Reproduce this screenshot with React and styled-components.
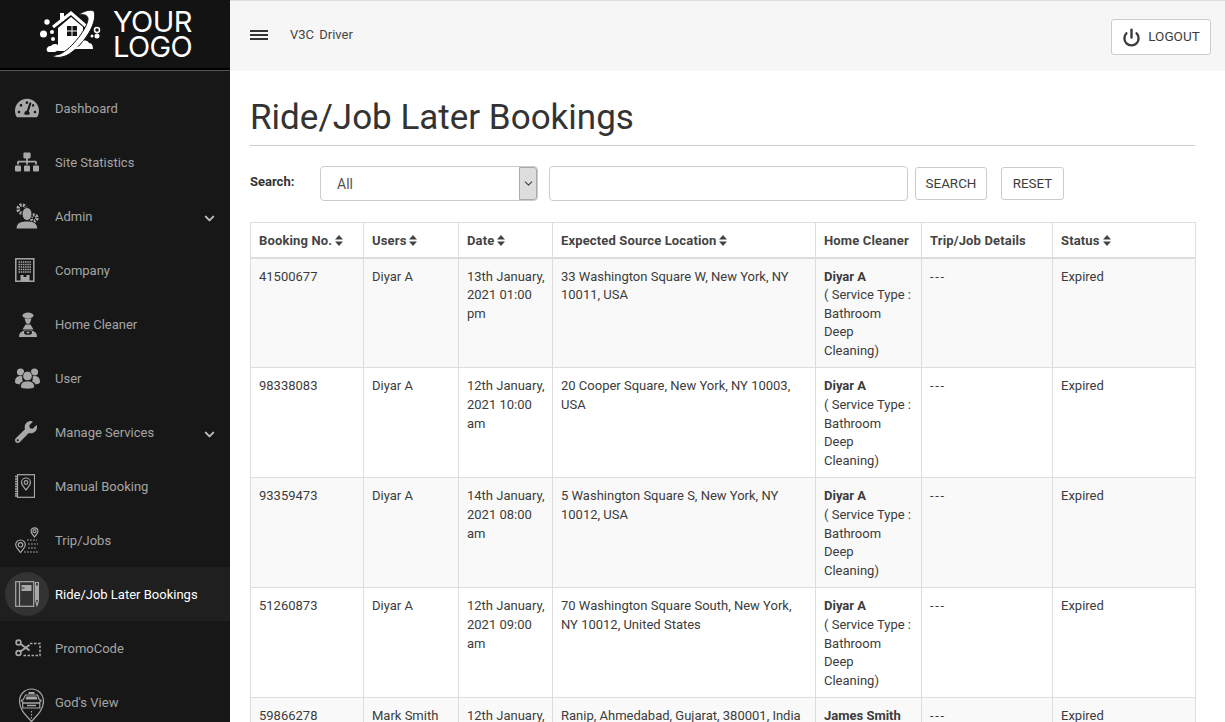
import styled, { createGlobalStyle } from 'styled-components';
import { FaTachometerAlt, FaSitemap, FaWrench } from 'react-icons/fa';
import { FiChevronDown, FiPower } from 'react-icons/fi';

const GlobalStyle = createGlobalStyle`
	html, body {
		margin: 0;
		height: 100%;
		overflow: hidden;
	}
	body {
		font-family: 'Roboto', 'Liberation Sans', sans-serif;
		font-size: 13px;
		line-height: 1.42857;
		color: #3c3c3c;
		background: #fff;
	}
	* {
		box-sizing: border-box;
	}
`;

const Page = styled.div`
	display: flex;
	height: 100vh;
	overflow: hidden;
`;

const Sidebar = styled.aside`
	width: 230px;
	flex: none;
	background: #171717;
`;

const LogoBar = styled.div`
	height: 71px;
	background: #131313;
	border-bottom: 1px solid #555;
	box-shadow: inset 0 -2px 0 #000;
	display: flex;
	align-items: center;
	padding: 0 0 2px 40px;
	gap: 11px;
`;

const LogoText = styled.div`
	font-family: 'Inter', sans-serif;
	font-size: 29px;
	line-height: 25px;
	font-weight: 400;
	letter-spacing: -0.6px;
	color: #fff;
`;

const Menu = styled.nav`
	padding-top: 10px;
`;

const MenuItem = styled.div`
	height: 54px;
	display: flex;
	align-items: center;
	position: relative;
	padding-left: 15px;
	color: ${(p) => (p.$active ? '#fff' : '#a5a5a5')};
	background: ${(p) => (p.$active ? '#1f1f1f' : 'transparent')};
`;

const MenuLabel = styled.span`
	margin-top: 2px;
`;

const IconSlot = styled.span`
	width: 40px;
	height: 44px;
	flex: none;
	display: flex;
	align-items: center;
	color: #a8a8a8;
	position: relative;
	svg {
		display: block;
	}
`;

const ActiveDisc = styled.span`
	position: absolute;
	left: -10px;
	top: 0;
	width: 44px;
	height: 44px;
	border-radius: 50%;
	background: #333;
`;

const IconInner = styled.span`
	position: relative;
	display: block;
`;

const Caret = styled(FiChevronDown)`
	position: absolute;
	right: 13px;
	top: 22px;
	color: #bbb;
	stroke-width: 3.2;
`;

const Main = styled.div`
	flex: 1;
	min-width: 0;
`;

const TopBar = styled.header`
	height: 71px;
	background: #f6f6f6;
	border-top: 1px solid #ddd;
	display: flex;
	align-items: center;
	padding: 0 14px 2px 20px;
`;

const Burger = styled.span`
	width: 18px;
	height: 10px;
	border-top: 2px solid #333;
	border-bottom: 2px solid #333;
	position: relative;
	&::after {
		content: '';
		position: absolute;
		left: 0;
		right: 0;
		top: 2px;
		height: 2px;
		background: #333;
	}
`;

const Brand = styled.span`
	margin-left: 22px;
	font-size: 13px;
	word-spacing: 2px;
	color: #444;
`;

const LogoutButton = styled.button`
	margin-left: auto;
	height: 36px;
	width: 100px;
	margin-top: 3px;
	padding: 1px 0 0;
	display: flex;
	align-items: center;
	justify-content: center;
	gap: 7px;
	background: #fff;
	border: 1px solid #ccc;
	border-radius: 3px;
	font: inherit;
	font-size: 13.5px;
	color: #3c3c3c;
	svg {
		stroke-width: 3;
	}
`;

const Content = styled.main`
	padding: 0 30px 0 20px;
`;

const Title = styled.h1`
	margin: 0;
	height: 75px;
	padding-top: 25px;
	font-size: 35px;
	line-height: 44px;
	font-weight: 400;
	color: #333;
	border-bottom: 1px solid #ccc;
`;

const SearchRow = styled.form`
	display: flex;
	align-items: center;
	height: 35px;
	margin: 20px 0 21px;
`;

const SearchLabel = styled.label`
	width: 70px;
	font-weight: 700;
	margin-top: -2px;
	color: #333;
`;

const SelectBox = styled.div`
	width: 218px;
	height: 35px;
	border: 1px solid #ccc;
	border-radius: 4px;
	display: flex;
	align-items: center;
	justify-content: space-between;
	padding: 2px 0 0 16px;
	font-size: 14px;
	color: #555;
`;

const SelectArrow = styled.span`
	width: 18px;
	height: 33px;
	margin-top: -2px;
	background: #ddd;
	border: 1px solid #aaa;
	border-radius: 0 3px 3px 0;
	display: flex;
	align-items: center;
	justify-content: center;
	color: #444;
`;

const TextInput = styled.input`
	width: 359px;
	height: 35px;
	margin: 0 7px 0 11px;
	border: 1px solid #ccc;
	border-radius: 4px;
`;

const PlainButton = styled.button`
	height: 33px;
	width: ${(p) => p.$width}px;
	padding: 1px 0 0;
	margin-right: 14px;
	background: #fff;
	border: 1px solid #ccc;
	border-radius: 3px;
	font: inherit;
	font-size: 13.4px;
	color: #3c3c3c;
`;

const Table = styled.table`
	width: 945px;
	table-layout: fixed;
	border-collapse: collapse;
	th, td {
		border: 1px solid #ddd;
		padding: 9px 8px 7px;
		text-align: left;
		vertical-align: top;
	}
	td {
		height: 110px;
	}
	th {
		padding: 9px 8px 6px;
		border-bottom-width: 2px;
		font-weight: 700;
		letter-spacing: 0.15px;
		color: #444;
		white-space: nowrap;
	}
	tbody tr:nth-child(odd) {
		background: #f9f9f9;
	}
`;

const SortIcon = styled.svg`
	width: 8px;
	height: 11px;
	margin-left: 3px;
	vertical-align: -1px;
	fill: #444;
`;

const Line = styled.span`
	display: block;
	white-space: nowrap;
`;

const Dashes = styled.span`
	letter-spacing: 1.6px;
`;

const Sort = () => (
	<SortIcon viewBox="0 0 8 11">
		<path d="M4 0l4 4.6H0zM4 11L0 6.4h8z" />
	</SortIcon>
);

const line = { fill: 'none', stroke: 'currentColor', strokeWidth: 1.2 };

// drawn in page coordinates, so the numbers read straight off the screenshot
const LogoMark = () => (
	<svg width="62" height="50" viewBox="40 10 62 50" fill="#fff">
		<path d="M53 28L71 14l16 14" fill="none" stroke="#fff" strokeWidth="3" />
		<path d="M60 14h4v8h-4z" />
		<path d="M58 29l13-11 12 10v12L68 52H58z" />
		<path d="M67 27h4.500v4.500H67zM72.500 27H77v4.500h-4.500zM67 32.500h4.500V37H67zM72.500 32.500H77V37h-4.500z" fill="#131313" />
		<path
			d="M94 12c4 12-10 32-22 41-6 5-14 7-20 4l8-2c12-5 28-27 28-35 0-4-4-5-10-4 6-4 12-6 16-4z"
			stroke="#131313"
			strokeWidth="1"
		/>
		<path d="M47 52c-1-3 1-5 4-5 1-2 5-3 7-1 3-1 5 1 5 3l-8 4h-7zM73 50c6-2 9-5 10-8 3-1 5 0 6 2 3 0 4 3 4 6z" />
		<circle cx="47" cy="23" r="2.700" />
		<circle cx="43.500" cy="35" r="3.500" />
		<circle cx="52" cy="33" r="2" />
		<circle cx="53" cy="40" r="2" />
		<circle cx="97" cy="31" r="2.500" fill="none" stroke="#fff" strokeWidth="1.500" />
		<circle cx="97" cy="37" r="2.500" />
		<circle cx="92" cy="37" r="1.500" />
	</svg>
);

const AdminIcon = () => (
	<svg width="24" height="26" viewBox="0 0 24 26" fill="currentColor">
		<circle cx="7" cy="6" r="4" fill="none" stroke="currentColor" strokeWidth="3.400" strokeDasharray="2 1.200" />
		<circle cx="19" cy="15" r="3" fill="none" stroke="currentColor" strokeWidth="3.400" strokeDasharray="2 1.100" />
		<ellipse cx="12" cy="11" rx="5" ry="6.500" stroke="#171717" strokeWidth="1" />
		<path d="M1 26c0-6 4-8 11-8s10 2 11 8z" stroke="#171717" strokeWidth="1" />
	</svg>
);

const CompanyIcon = () => (
	<svg width="20" height="24" viewBox="0 0 20 24">
		<rect x="0.800" y="0.800" width="18" height="22.400" {...line} strokeWidth="1.500" />
		<path
			d="M3.500 4h13M3.500 6.500h13M3.500 9h13M3.500 11.500h13M3.500 14h13"
			stroke="currentColor"
			strokeWidth="1.500"
			strokeDasharray="1.500 0.700"
		/>
		<path d="M5.500 23v-6h3v2h3v-2h3v6z" fill="currentColor" />
	</svg>
);

const CleanerIcon = () => (
	<svg width="22" height="25" viewBox="-4 0 22 25" fill="currentColor">
		<ellipse cx="9" cy="3.500" rx="5.500" ry="3" />
		<path d="M5.500 6.500h7l-1 3a2.500 2.500 0 0 1-5 0z" />
		<path d="M6.500 12.500h5l3 5H3.500z" />
		<path d="M0 25c0-5 4-7 9-7s9 2 9 7z" />
		<ellipse cx="9" cy="20.500" rx="4" ry="2.300" fill="#171717" />
		<ellipse cx="9" cy="20.500" rx="1.500" ry="0.900" />
	</svg>
);

const GroupIcon = () => (
	<svg width="25" height="21" viewBox="0 0 25 21" fill="currentColor">
		<circle cx="5.500" cy="4" r="3.600" />
		<circle cx="19.500" cy="4" r="3.600" />
		<path d="M0 14c0-4 2-6 5.500-6 1 0 1.700.2 2.200.5C7 10 7 12 8 13.500 6 14 5 15 4.500 16.500 2 16 0 15.500 0 14zM25 14c0-4-2-6-5.500-6-1 0-1.700.2-2.200.5.700 1.500.700 3.500-.3 5 2 .5 3 1.500 3.500 3 2.500-.5 4.500-1 4.500-2.500z" />
		<circle cx="12.500" cy="8" r="4.800" stroke="#171717" strokeWidth="0.800" />
		<path d="M5.500 19c0-4 2.500-6 7-6s7 2 7 6c0 1-3 2-7 2s-7-1-7-2z" stroke="#171717" strokeWidth="0.800" />
	</svg>
);

const BookingIcon = () => (
	<svg width="20" height="24" viewBox="0 0 20 24">
		<rect x="2.500" y="0.700" width="17" height="22.600" {...line} />
		<path d="M3 2.500H0M3 5H0M3 7.500H0M3 10H0M3 12.500H0M3 15H0M3 17.500H0M3 20H0M3 22H0" stroke="currentColor" strokeWidth="1.500" />
		<path d="M11 16c-3-4-4.500-5.500-4.500-7.500a4.500 4.500 0 0 1 9 0c0 2-1.500 3.500-4.500 7.500z" {...line} />
		<circle cx="11" cy="8.500" r="1.800" {...line} />
	</svg>
);

const TripIcon = () => (
	<svg width="25" height="26" viewBox="0 0 25 26">
		<path d="M5.500 25.500c-3-3.500-4.800-5.500-4.800-7.700a4.800 4.800 0 0 1 9.600 0c0 2.200-1.800 4.200-4.800 7.700z" {...line} />
		<circle cx="5.500" cy="17.800" r="2.200" {...line} />
		<path d="M19.500 10c-2-2.500-3.400-4-3.400-5.800a3.400 3.400 0 0 1 6.800 0c0 1.800-1.400 3.300-3.400 5.800z" {...line} />
		<circle cx="19.500" cy="4.200" r="1.500" {...line} />
		<path
			d="M12 13h10M13 17h10M13 21h9M9 25h14"
			{...line}
			strokeDasharray="1.800 1.200"
		/>
	</svg>
);

const LaterIcon = () => (
	<svg width="24" height="26" viewBox="0 0 24 26">
		<rect x="0.700" y="0.700" width="18" height="24.600" {...line} />
		<path d="M4.500 1v24" {...line} />
		<rect x="6.500" y="4" width="10" height="6" fill="currentColor" />
		<path d="M6.500 7h3" stroke="#333" strokeWidth="1" />
		<path d="M20.500 1.500h3v18l-1.500 5-1.500-5zM20 5h4" {...line} />
		<path d="M20.500 5h3v14h-3z" fill="currentColor" />
	</svg>
);

const PromoIcon = () => (
	<svg width="26" height="18" viewBox="0 0 26 18">
		<circle cx="3.500" cy="3.500" r="2.400" {...line} strokeWidth="1.600" />
		<circle cx="3.500" cy="14" r="2.400" {...line} strokeWidth="1.600" />
		<path d="M5.500 5l9 6.500M5.500 12.500L14.500 6" stroke="currentColor" strokeWidth="2" />
		<path d="M15 4.500h10v12H8" {...line} strokeDasharray="2.500 1.500" strokeWidth="1.500" />
	</svg>
);

const GodsIcon = () => (
	<svg width="29" height="40" viewBox="-4 -6 29 40">
		<path d="M12.500 33.500c-8-8.500-12-13-12-20.500a12 12 0 0 1 24 0c0 7.500-4 12-12 20.500z" {...line} />
		<path d="M9.500 4h6v2h-6z" fill="currentColor" />
		<path d="M6.500 7h12l2 5h1.500v1.200l-1.200.6V20H3.700v-6.200l-1.200-.6V12H4z" {...line} />
		<path d="M7.500 8.500h10l1 3h-12z" fill="currentColor" />
		<path d="M4 15h17M8 17.500h9" stroke="currentColor" strokeWidth="1.400" />
		<path d="M12.500 23v8" stroke="currentColor" strokeWidth="1.200" strokeDasharray="1.500 1.500" />
	</svg>
);

const menuItems = [
	{ label: 'Dashboard', icon: <FaTachometerAlt size={24} /> },
	{ label: 'Site Statistics', icon: <FaSitemap size={24} /> },
	{ label: 'Admin', icon: <AdminIcon />, caret: true },
	{ label: 'Company', icon: <CompanyIcon /> },
	{ label: 'Home Cleaner', icon: <CleanerIcon /> },
	{ label: 'User', icon: <GroupIcon /> },
	{ label: 'Manage Services', icon: <FaWrench size={22} />, caret: true },
	{ label: 'Manual Booking', icon: <BookingIcon /> },
	{ label: 'Trip/Jobs', icon: <TripIcon /> },
	{ label: 'Ride/Job Later Bookings', icon: <LaterIcon />, active: true },
	{ label: 'PromoCode', icon: <PromoIcon /> },
	{ label: "God's View", icon: <GodsIcon /> },
];

const serviceLines = ['( Service Type :', 'Bathroom', 'Deep', 'Cleaning)'];

const bookings = [
	{ no: '41500677', user: 'Diyar A', date: ['13th January,', '2021 01:00', 'pm'], location: '33 Washington Square W, New York, NY 10011, USA', cleaner: 'Diyar A' },
	{ no: '98338083', user: 'Diyar A', date: ['12th January,', '2021 10:00', 'am'], location: '20 Cooper Square, New York, NY 10003, USA', cleaner: 'Diyar A' },
	{ no: '93359473', user: 'Diyar A', date: ['14th January,', '2021 08:00', 'am'], location: '5 Washington Square S, New York, NY 10012, USA', cleaner: 'Diyar A' },
	{ no: '51260873', user: 'Diyar A', date: ['12th January,', '2021 09:00', 'am'], location: '70 Washington Square South, New York, NY 10012, United States', cleaner: 'Diyar A' },
	{ no: '59866278', user: 'Mark Smith', date: ['12th January,', '2021 09:00', 'am'], location: 'Ranip, Ahmedabad, Gujarat, 380001, India', cleaner: 'James Smith' },
];

const App = () => (
	<Page>
		<GlobalStyle />
		<Sidebar>
			<LogoBar>
				<LogoMark />
				<LogoText>
					YOUR
					<br />
					LOGO
				</LogoText>
			</LogoBar>
			<Menu>
				{menuItems.map((item) => (
					<MenuItem key={item.label} $active={item.active}>
						<IconSlot>
							{item.active && <ActiveDisc />}
							<IconInner>{item.icon}</IconInner>
						</IconSlot>
						<MenuLabel>{item.label}</MenuLabel>
						{item.caret && <Caret size={15} />}
					</MenuItem>
				))}
			</Menu>
		</Sidebar>
		<Main>
			<TopBar>
				<Burger />
				<Brand>V3C Driver</Brand>
				<LogoutButton>
					<FiPower size={19} />
					LOGOUT
				</LogoutButton>
			</TopBar>
			<Content>
				<Title>Ride/Job Later Bookings</Title>
				<SearchRow>
					<SearchLabel>Search:</SearchLabel>
					<SelectBox>
						All
						<SelectArrow>
							<FiChevronDown size={13} />
						</SelectArrow>
					</SelectBox>
					<TextInput />
					<PlainButton $width={72}>SEARCH</PlainButton>
					<PlainButton $width={63}>RESET</PlainButton>
				</SearchRow>
				<Table>
					<colgroup>
						<col width="113" />
						<col width="95" />
						<col width="94" />
						<col width="263" />
						<col width="106" />
						<col width="131" />
						<col width="143" />
					</colgroup>
					<thead>
						<tr>
							<th>Booking No.<Sort /></th>
							<th>Users<Sort /></th>
							<th>Date<Sort /></th>
							<th>Expected Source Location<Sort /></th>
							<th>Home Cleaner</th>
							<th>Trip/Job Details</th>
							<th>Status<Sort /></th>
						</tr>
					</thead>
					<tbody>
						{bookings.map((row) => (
							<tr key={row.no}>
								<td>{row.no}</td>
								<td>{row.user}</td>
								<td>
									{row.date.map((part) => (
										<Line key={part}>{part}</Line>
									))}
								</td>
								<td>{row.location}</td>
								<td>
									<strong>{row.cleaner}</strong>
									{serviceLines.map((part) => (
										<Line key={part}>{part}</Line>
									))}
								</td>
								<td><Dashes>---</Dashes></td>
								<td>Expired</td>
							</tr>
						))}
					</tbody>
				</Table>
			</Content>
		</Main>
	</Page>
);

export default App;
